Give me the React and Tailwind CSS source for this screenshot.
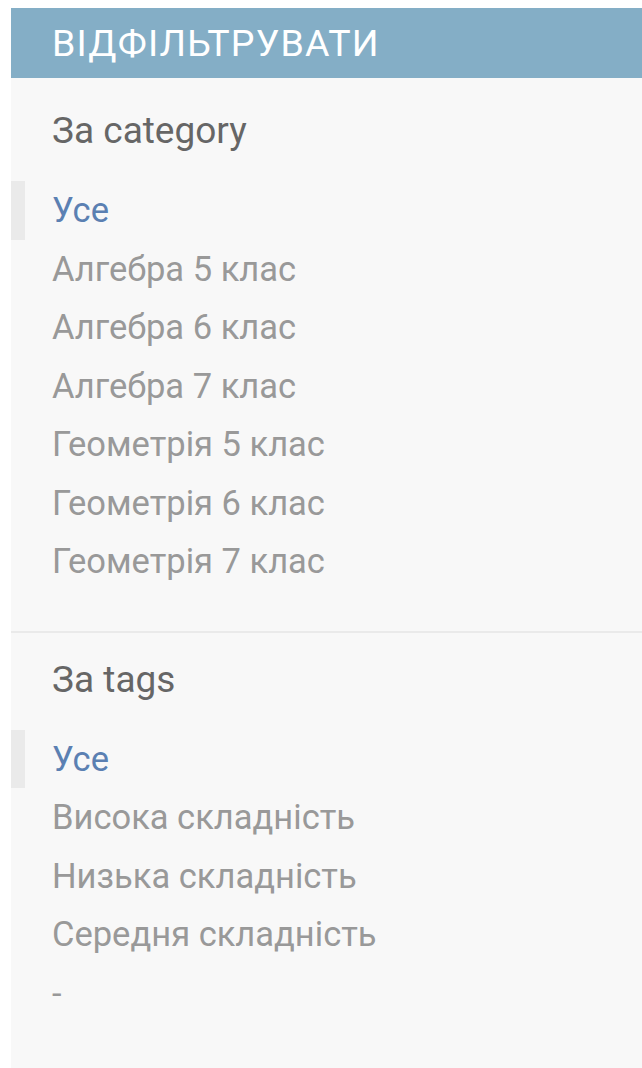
import React from 'react';

const filters = [
    {
        title: 'За category',
        choices: ['Усе', 'Алгебра 5 клас', 'Алгебра 6 клас', 'Алгебра 7 клас', 'Геометрія 5 клас', 'Геометрія 6 клас', 'Геометрія 7 клас'],
    },
    {
        title: 'За tags',
        choices: ['Усе', 'Висока складність', 'Низька складність', 'Середня складність', '-'],
    },
];

const FilterGroup = ({ title, choices, last }) => (
    <div className={last ? 'pt-[27px]' : 'pt-[33px] pb-[40px] border-b-2 border-[#eaeaea]'}>
        <h3 className="pl-[41px] h-[40px] leading-[40px] text-[37px] text-[#666]">{title}</h3>
        <ul className="mt-[30px]">
            {choices.map((choice, i) => (
                <li
                    key={choice}
                    className={
                        i === 0
                            ? 'h-[58.5px] leading-[58.5px] border-l-[14px] border-[#eaeaea] pl-[27px] text-[#5b80b2]'
                            : 'h-[58.5px] leading-[58.5px] pl-[41px] text-[#999]'
                    }
                >
                    <a href="#">{choice}</a>
                </li>
            ))}
        </ul>
    </div>
);

export default function App() {
    return (
        <div className="bg-white pt-[8px] pl-[11px] font-['Roboto',sans-serif]">
            <div className="bg-[#f8f8f8] h-[1060px] text-[34.5px]">
                <h2 className="h-[70px] flex items-center pl-[41px] bg-[#84aec6] text-white text-[37.5px] uppercase tracking-[1.2px]">
                    Відфільтрувати
                </h2>
                {filters.map((f, i) => (
                    <FilterGroup key={f.title} title={f.title} choices={f.choices} last={i === filters.length - 1} />
                ))}
            </div>
        </div>
    );
}
